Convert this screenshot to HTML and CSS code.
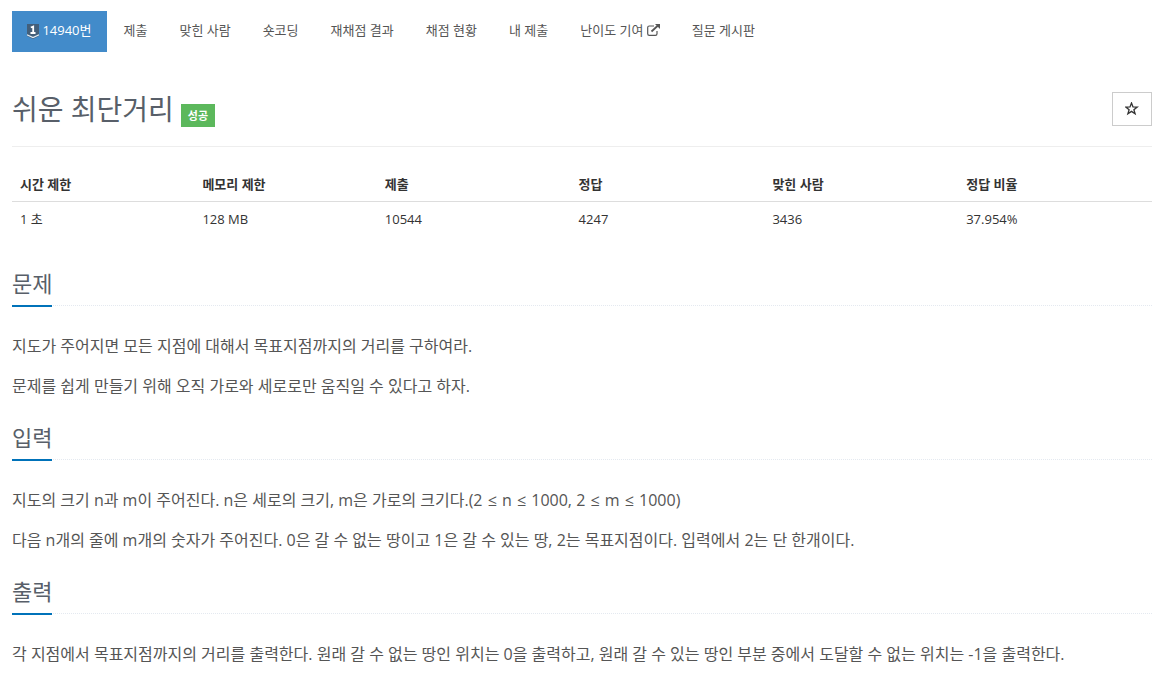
FILE: index.html
```html
<!DOCTYPE html>
<html lang="ko">
<head>
<meta charset="utf-8">
<title>14940번: 쉬운 최단거리</title>
<link rel="stylesheet" href="styles.css">
</head>
<body>
<nav>
  <ul class="menu">
    <li><a class="active" href="#"><svg class="tier" viewBox="0 0 12 15" aria-hidden="true"><path d="M0 0h12v12L6 15 0 12z" fill="#435f7a"/><path d="M0 10.800l6 2.700 6-2.700" fill="none" stroke="#e3edf5" stroke-width="1.200"/><path d="M3.800 3.500L6.200 2.500v6.500M3.500 9h5" fill="none" stroke="#fff" stroke-width="1.800"/></svg> 14940번</a></li>
    <li><a href="#">제출</a></li>
    <li><a href="#">맞힌 사람</a></li>
    <li><a href="#">숏코딩</a></li>
    <li><a href="#">재채점 결과</a></li>
    <li><a href="#">채점 현황</a></li>
    <li><a href="#">내 제출</a></li>
    <li><a href="#">난이도 기여 <svg class="external" viewBox="0 0 13 12" aria-hidden="true"><path d="M7 2H2.300Q.7 2 .7 3.600v6.100q0 1.600 1.600 1.600h6.100q1.600 0 1.600-1.600V7" fill="none" stroke="currentColor" stroke-width="1.200"/><path d="M4.500 7.500L11 1.500" stroke="currentColor" stroke-width="1.800"/><path d="M8 0h5v5z" fill="currentColor"/></svg></a></li>
    <li><a href="#">질문 게시판</a></li>
  </ul>
</nav>
<main>
  <header class="page-header">
    <h1>쉬운 최단거리</h1>
    <span class="label">성공</span>
    <button class="favorite" type="button" aria-label="즐겨찾기"><svg viewBox="0 0 14 14" aria-hidden="true"><path d="M6.500 1l1.500 3.900 4.200.2-3.300 2.600 1.200 4.100-3.600-2.400-3.600 2.400 1.200-4.100L.8 5.100 5 4.900z" fill="none" stroke="currentColor" stroke-width="1.300"/></svg></button>
  </header>
  <table class="info">
    <thead>
      <tr><th class="limit">시간 제한</th><th class="limit">메모리 제한</th><th>제출</th><th>정답</th><th>맞힌 사람</th><th>정답 비율</th></tr>
    </thead>
    <tbody>
      <tr><td>1 초</td><td>128 MB</td><td>10544</td><td>4247</td><td>3436</td><td>37.954%</td></tr>
    </tbody>
  </table>
  <section>
    <div class="headline"><h2>문제</h2></div>
    <p>지도가 주어지면 모든 지점에 대해서 목표지점까지의 거리를 구하여라.</p>
    <p>문제를 쉽게 만들기 위해 오직 가로와 세로로만 움직일 수 있다고 하자.</p>
  </section>
  <section>
    <div class="headline"><h2>입력</h2></div>
    <p>지도의 크기 n과 m이 주어진다. n은 세로의 크기, m은 가로의 크기다.(2 <span class="rel">≤</span> n <span class="rel">≤</span> 1000, 2 <span class="rel">≤</span> m <span class="rel">≤</span> 1000)</p>
    <p>다음 n개의 줄에 m개의 숫자가 주어진다. 0은 갈 수 없는 땅이고 1은 갈 수 있는 땅, 2는 목표지점이다. 입력에서 2는 단 한개이다.</p>
  </section>
  <section>
    <div class="headline"><h2>출력</h2></div>
    <p>각 지점에서 목표지점까지의 거리를 출력한다. 원래 갈 수 없는 땅인 위치는 0을 출력하고, 원래 갈 수 있는 땅인 부분 중에서 도달할 수 없는 위치는 -1을 출력한다.</p>
  </section>
</main>
</body>
</html>
```

FILE: styles.css
```css
* { box-sizing: border-box; }
body {
  margin: 0;
  padding: 11px 10px 0 12px;
  background: #fff;
  color: #333;
  font: 13px/20px "Open Sans", "Noto Sans CJK KR", sans-serif;
}
.menu {
  display: flex;
  flex-wrap: wrap;
  gap: 2px;
  margin: 0;
  padding: 0;
  list-style: none;
}
.menu a {
  display: block;
  padding: 9px 15px 12px;
  color: #555;
  text-decoration: none;
  white-space: nowrap;
}
.menu .active { background: #428bca; color: #fff; }
.tier { width: 12px; height: 15px; vertical-align: -4px; }
.external { width: 13px; height: 12px; vertical-align: -1px; }
.page-header {
  display: flex;
  align-items: center;
  gap: 7px;
  margin-top: 36px;
  padding-bottom: 15px;
  border-bottom: 1px solid #eee;
}
h1 {
  margin: 0;
  color: #585f69;
  font-size: 28px;
  font-weight: 400;
  line-height: 43px;
}
.label {
  margin-top: 12px;
  padding: 2px 7px 1px;
  background: #5cb85c;
  color: #fff;
  font-size: 11px;
  font-weight: 700;
}
.favorite {
  display: flex;
  align-items: center;
  justify-content: center;
  width: 40px;
  height: 34px;
  margin: 0 0 2px auto;
  padding: 0;
  border: 1px solid #ccc;
  background: #fff;
  color: #333;
}
.favorite svg { width: 14px; height: 14px; }
.info {
  width: 100%;
  margin: 19px 0 30px;
  border-collapse: collapse;
  table-layout: fixed;
}
.info th, .info td { padding: 7px 8px 8px; text-align: left; }
.info th { padding: 8px 8px 7px; border-bottom: 1px solid #ddd; font-weight: 700; }
.info .limit { width: 16%; }
.headline {
  display: flex;
  margin-bottom: 25px;
  border-bottom: 1px dotted #e4e9f0;
}
h2 {
  margin: 0 0 -2px;
  padding-bottom: 5px;
  border-bottom: 2px solid #0072b9;
  color: #585f69;
  font-size: 22px;
  font-weight: 400;
  line-height: 33px;
}
section p {
  margin: 0 0 10px;
  color: #555;
  font-size: 16px;
  line-height: 30px;
}
.rel { padding: 0 1px; }
section + section { margin-top: 20px; }
```
